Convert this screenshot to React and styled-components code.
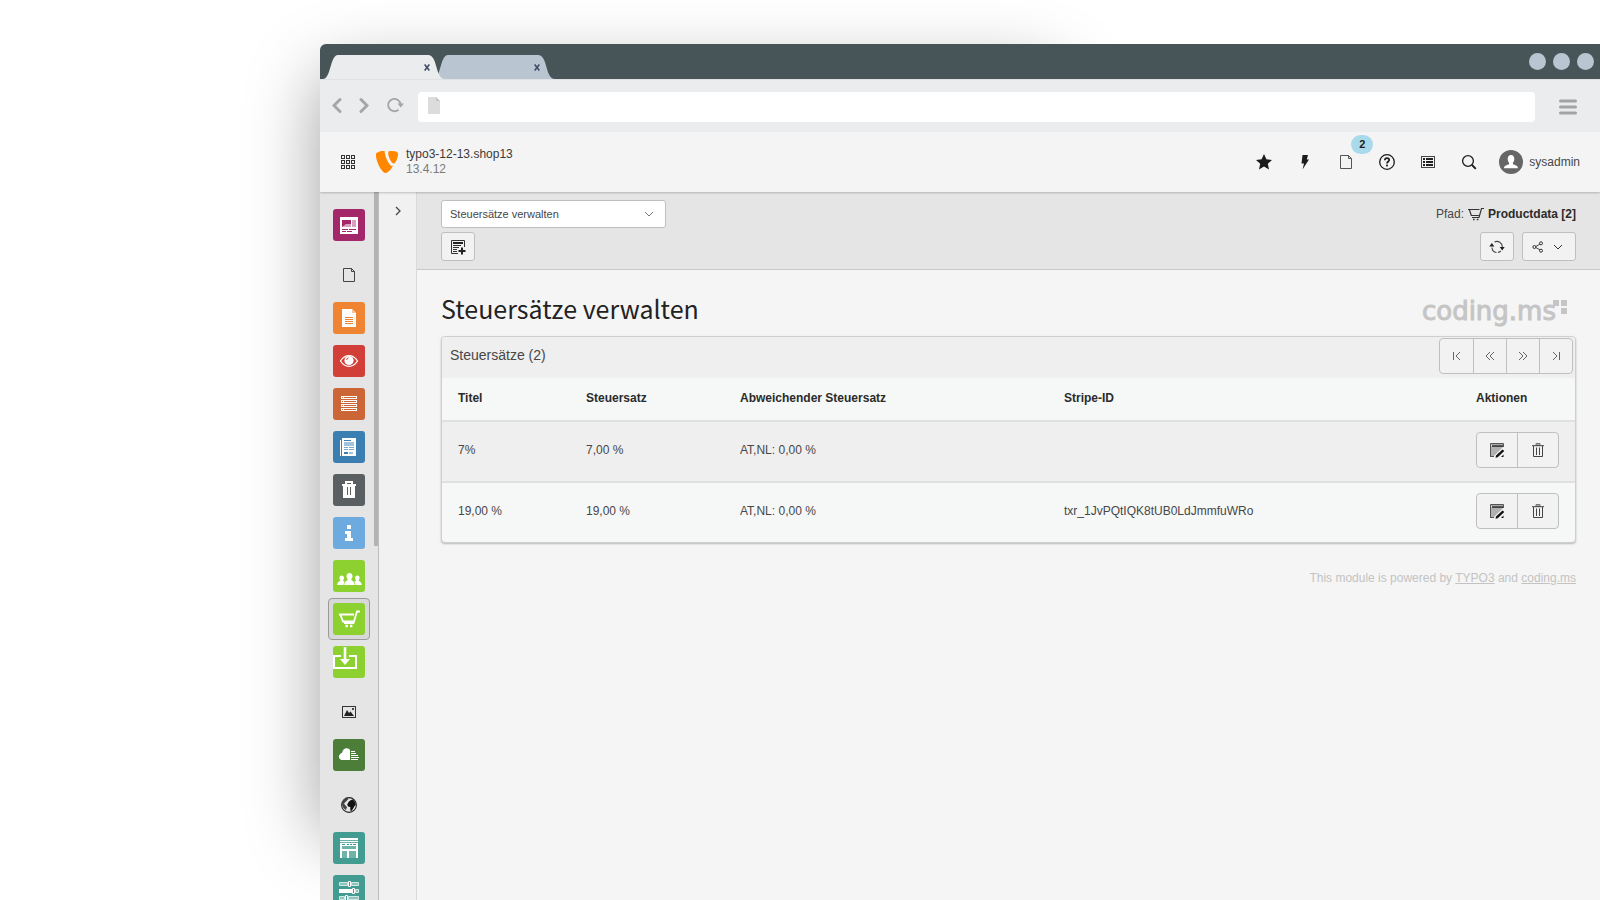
import React from "react";
import styled, { createGlobalStyle, css } from "styled-components";

const GlobalStyle = createGlobalStyle`
  *, *::before, *::after { box-sizing: border-box; }
  html, body { margin: 0; background: #fff; }
  body {
    font-family: "Liberation Sans", Arial, sans-serif;
    font-size: 12px;
    line-height: 16px;
    color: #474747;
  }
  button, select, input { font: inherit; color: inherit; margin: 0; }
  svg { display: block; flex: none; }
`;

/* ---------- page and browser frame ---------- */

const Stage = styled.div`
  height: 100vh;
  padding: 44px 0 0 20%;
  overflow: hidden;
  display: flex;
  isolation: isolate;
`;

const BrowserWindow = styled.div`
  position: relative;
  flex: 1;
  min-width: 0;
  display: flex;
  flex-direction: column;

  &::before {
    content: "";
    position: absolute;
    z-index: -1;
    inset: 28px 42% 60px 0;
    border-radius: 24px;
    box-shadow: -2px 0 70px rgba(0, 0, 0, 0.36);
  }
`;

const TabBar = styled.div`
  flex: none;
  height: 35px;
  padding: 0 6px 0 3px;
  display: flex;
  align-items: flex-end;
  background: #475458;
  border-radius: 6px 0 0 0;
`;

const Tab = styled.div`
  width: 122px;
  height: 24px;
  margin-right: -12px;
  padding: 0 13px;
  display: flex;
  align-items: center;
  justify-content: flex-end;
  position: relative;
  z-index: ${(p) => (p.$active ? 1 : 0)};
  background: ${(p) => (p.$active ? "#ebecee" : "#b9c6d2")};
  clip-path: path("M0 24 C8 24 7 0 15 0 H105 C115 0 112 24 122 24 Z");
`;

const TabClose = styled.button`
  width: 10px;
  height: 14px;
  padding: 0;
  border: 0;
  background: none;
  color: #43506b;
  display: grid;
  place-items: center;
`;

const WindowDots = styled.div`
  margin-left: auto;
  align-self: center;
  display: flex;
  gap: 7px;
`;

const Dot = styled.button`
  width: 17px;
  height: 17px;
  padding: 0;
  border: 0;
  border-radius: 50%;
  background: #b9c6d2;
`;

const BrowserBar = styled.div`
  flex: none;
  height: 53px;
  padding: 1px 23px 0 12px;
  display: flex;
  align-items: center;
  background: #ebecee;
  border-top: 1px solid #dfe1e3;
`;

const BrowserButton = styled.button`
  width: ${(p) => p.$width || 27}px;
  height: 28px;
  padding: 0 0 ${(p) => p.$lift || 0}px;
  border: 0;
  background: none;
  color: #a6a6a6;
  display: flex;
  align-items: center;
  justify-content: ${(p) => p.$align || "flex-start"};
`;

const AddressBar = styled.label`
  flex: 1;
  height: 30px;
  padding: 0 10px 2px;
  display: flex;
  align-items: center;
  gap: 8px;
  background: #fff;
  border-radius: 4px;
`;

const AddressInput = styled.input`
  flex: 1;
  border: 0;
  outline: 0;
  background: none;
`;

/* ---------- backend top bar ---------- */

const TopBar = styled.header`
  flex: none;
  height: 60px;
  padding: 0 20px 0 21px;
  display: flex;
  align-items: center;
  background: #f4f4f4;
  box-shadow: 0 1px 2px rgba(0, 0, 0, 0.22);
  clip-path: inset(0 0 -4px 0);
  z-index: 1;
`;

const PlainButton = styled.button`
  padding: 0;
  border: 0;
  background: none;
  display: grid;
  place-items: center;
`;

const SiteLink = styled.a`
  margin-left: 21px;
  display: flex;
  align-items: center;
  gap: 8px;
  color: #3a3a3a;
  text-decoration: none;
`;

const SiteText = styled.span`
  display: flex;
  flex-direction: column;
  line-height: 15px;
  padding-bottom: 1px;
`;

const Version = styled.span`
  color: #7b7b7b;
`;

const Tools = styled.nav`
  margin-left: auto;
  display: flex;
  align-items: center;
`;

const ToolButton = styled(PlainButton)`
  position: relative;
  width: 41px;
  height: 40px;
  color: #1c1c1c;
`;

const Badge = styled.span`
  position: absolute;
  top: -7px;
  left: 26px;
  width: 22px;
  height: 19px;
  border-radius: 10px;
  background: #a9daec;
  color: #222;
  font-size: 11px;
  line-height: 19px;
  font-weight: bold;
  text-align: center;
`;

const UserButton = styled.button`
  margin-left: 10px;
  padding: 0;
  border: 0;
  background: none;
  display: flex;
  align-items: center;
  gap: 6px;
`;

/* ---------- columns ---------- */

const Body = styled.div`
  flex: 1;
  min-height: 0;
  display: flex;
`;

const Sidebar = styled.nav`
  flex: none;
  width: 59px;
  display: flex;
  background: #e5e5e5;
  border-right: 1px solid #bdbdbd;
`;

const ModuleList = styled.div`
  flex: 1;
  padding: 12px 4px 0 8px;
  display: flex;
  flex-direction: column;
  gap: 1px;
  overflow: hidden;
`;

const ScrollThumb = styled.div`
  width: 4px;
  height: 50%;
  background: #b3b3b3;
`;

const ModuleItem = styled.button`
  flex: none;
  width: 42px;
  height: 42px;
  padding: 0;
  display: grid;
  place-items: center;
  border: 1px solid transparent;
  border-radius: 4px;
  background: none;
  color: #333;
  ${(p) => p.$group && css`margin-top: 7px;`}
  ${(p) => p.$active && css`border-color: #9a9a9a; background: #d8d8d8;`}
`;

const Tile = styled.span`
  width: 32px;
  height: 32px;
  border-radius: 3px;
  background: ${(p) => p.$color};
  display: block;
`;

const TreeColumn = styled.aside`
  flex: none;
  width: 38px;
  padding-top: 11px;
  display: flex;
  flex-direction: column;
  align-items: center;
  background: #f1f1f1;
  border-right: 1px solid #d9d9d9;
`;

const Main = styled.main`
  flex: 1;
  min-width: 0;
  background: #f5f5f5;
`;

const DocHeader = styled.div`
  padding: 8px 24px;
  display: flex;
  flex-direction: column;
  gap: 4px;
  background: #e5e5e5;
  border-bottom: 1px solid #c9c9c9;
`;

const DocRow = styled.div`
  display: flex;
  align-items: center;
  justify-content: space-between;
`;

const SelectWrap = styled.label`
  width: 225px;
  height: 28px;
  display: grid;
  grid-template-columns: 1fr 32px;
  align-items: center;
  justify-items: center;
  background: #fff;
  border: 1px solid #bfbfbf;
  border-radius: 3px;
  color: #777;

  & > * { grid-row: 1; }
  & > svg { grid-column: 2; pointer-events: none; }
`;

const Select = styled.select`
  grid-column: 1 / -1;
  width: 100%;
  height: 26px;
  padding: 0 8px;
  border: 0;
  appearance: none;
  background: none;
  font-size: 11px;
  color: #474747;
`;

const Path = styled.div`
  display: flex;
  align-items: center;
  gap: 4px;
  color: #333;

  span { color: #474747; }
  strong { color: #2b2b2b; }
`;

const ButtonRow = styled.div`
  display: flex;
  gap: 8px;
`;

const Button = styled.button`
  width: ${(p) => p.$width || 34}px;
  height: 29px;
  padding: 0;
  display: flex;
  align-items: center;
  justify-content: center;
  gap: 6px;
  background: #f2f2f2;
  border: 1px solid #bfbfbf;
  border-radius: 3px;
  color: #333;
`;

const Content = styled.div`
  padding: 24px;
`;

const TitleRow = styled.div`
  display: flex;
  align-items: flex-start;
  justify-content: space-between;
  height: 42px;
`;

const Title = styled.h1`
  margin: 0;
  font-family: "Noto Sans CJK SC", "Open Sans", sans-serif;
  font-size: 25px;
  line-height: 28px;
  font-weight: 400;
  color: #222;
`;

const Brand = styled.div`
  position: relative;
  padding-right: 20px;
  font-family: "DejaVu Sans", sans-serif;
  font-size: 26px;
  line-height: 34px;
  color: #c5c5c5;
  -webkit-text-stroke: 1px #c5c5c5;
`;

const BrandSquares = styled.svg`
  position: absolute;
  top: 6px;
  right: 8px;
`;

const Panel = styled.section`
  background: #f6f8f7;
  border: 1px solid #cfcfcf;
  border-radius: 4px;
  box-shadow: 0 1px 2px rgba(0, 0, 0, 0.25);
  overflow: hidden;
`;

const PanelHeader = styled.div`
  height: 41px;
  padding: 0 2px 3px 8px;
  display: flex;
  align-items: center;
  justify-content: space-between;
  background: #efefef;
`;

const PanelTitle = styled.h2`
  margin: 0;
  padding-bottom: 2px;
  font-size: 14px;
  line-height: 20px;
  font-weight: normal;
`;

const ButtonGroup = styled.div`
  display: inline-flex;
  vertical-align: middle;
  border: 1px solid #bfbfbf;
  border-radius: 4px;
  background: #f2f2f2;
`;

const GroupButton = styled.button`
  width: ${(p) => p.$width}px;
  height: 34px;
  padding: 0;
  display: grid;
  place-items: center;
  border: 0;
  background: none;
  color: ${(p) => (p.$muted ? "#666" : "#222")};

  & + & { border-left: 1px solid #bfbfbf; }
`;

const Table = styled.table`
  width: 100%;
  table-layout: fixed;
  border-collapse: separate;
  border-spacing: 0;
`;

const Col = styled.col`
  width: ${(p) => (p.$width ? `${p.$width}px` : "auto")};
`;

const HeadCell = styled.th`
  height: 44px;
  padding: 0 16px 2px;
  text-align: left;
  color: #2b2b2b;
  border-bottom: 2px solid #e0e0e0;
`;

const Row = styled.tr`
  &:nth-child(odd) { background: #efefef; }
  &:last-child > td { border-bottom: 0; height: 59px; }
`;

const Cell = styled.td`
  height: 61px;
  padding: 0 16px 3px;
  white-space: nowrap;
  border-bottom: 2px solid #e0e0e0;
`;

const Footer = styled.footer`
  padding-top: 27px;
  text-align: right;
  color: #c3c3c3;

  a { color: inherit; text-decoration: underline; }
`;

/* ---------- icons ---------- */

const Svg = ({ size = 16, box = 16, children, ...rest }) => (
  <svg width={size} height={size} viewBox={`0 0 ${box} ${box}`} fill="none" aria-hidden="true" {...rest}>
    {children}
  </svg>
);

const Chevron = ({ dir, size = 16, width = 1 }) => {
  const d = {
    left: "M10 4L6 8l4 4",
    right: "M6 4l4 4-4 4",
    down: "M4 6l4 4 4-4",
  }[dir];
  return <Svg size={size}><path d={d} stroke="currentColor" strokeWidth={width} /></Svg>;
};

const NavArrow = ({ flip }) => (
  <svg width="10" height="17" viewBox="0 0 10 17" fill="none" aria-hidden="true">
    <path d={flip ? "M2 2.500l6 6-6 6" : "M8 2.500l-6 6 6 6"} stroke="currentColor" strokeWidth="3" strokeLinecap="round" />
  </svg>
);

const Reload = () => (
  <svg width="18" height="16" viewBox="0 0 18 16" fill="none" aria-hidden="true">
    <path d="M11.500 12.700A6.200 6.200 0 1 1 13.600 7.500" stroke="currentColor" strokeWidth="1.800" />
    <path d="M10.500 6.500h6.500L13.700 10.500z" fill="currentColor" />
  </svg>
);

const PageGlyph = () => (
  <svg width="12" height="17" viewBox="0 0 12 17" aria-hidden="true">
    <path d="M0 0h8l4 4v13H0z" fill="#dcdcdc" />
    <path d="M8 0l4 4H8z" fill="#c4c4c4" />
  </svg>
);

const MenuGlyph = () => (
  <svg width="18" height="16" viewBox="0 0 18 16" aria-hidden="true">
    <path d="M1.500 2h15M1.500 8h15M1.500 14h15" stroke="#a3a3a3" strokeWidth="3" strokeLinecap="round" />
  </svg>
);

const CloseGlyph = () => (
  <svg width="6" height="7" viewBox="0 0 6 7" aria-hidden="true">
    <path d="M.6.500l4.800 6M5.400.500l-4.800 6" stroke="currentColor" strokeWidth="1.700" />
  </svg>
);

const GridIcon = () => (
  <Svg size={14} box={14}>
    {[0, 5, 10].map((y) =>
      [0, 5, 10].map((x) => (
        <rect key={`${x}-${y}`} x={x + 0.5} y={y + 0.5} width="3" height="3" stroke="#333" />
      ))
    )}
  </Svg>
);

const Typo3Logo = () => (
  <Svg size={22} box={22}>
    <path d="M17 14.800c-.3.100-.6.100-1 .1-3 0-7.300-10.300-7.300-13.700 0-1.200.3-1.700.7-2-3.600.4-8 1.700-9.300 3.400C-.2 3 0 3.700 0 4.700 0 10 5.700 22 9.700 22c1.900 0 5-3 7.300-7.200" fill="#ff8700" />
    <path d="M15.200.1C19 .1 22 .7 22 2.900c0 4.400-2.800 9.700-4.200 9.700-2.500 0-5.600-7-5.600-10.400C12.200.6 12.800.1 15.200.1" fill="#ff8700" />
  </Svg>
);

const Star = () => (
  <Svg><path d="M8 0l2.400 5.300 5.600.600-4.200 3.800L13 15.500 8 12.600 3 15.500l1.200-5.800L0 5.900l5.600-.6z" fill="currentColor" /></Svg>
);

const Bolt = () => (
  <Svg><path d="M5.500 1h5.500L9.800 5.500H12L5.500 15.500 7 9.500H4.500z" fill="currentColor" /></Svg>
);

const Doc = ({ color = "#444" }) => (
  <Svg>
    <path d="M2.500 1.500h8l3 3v10h-11zM10.500 1.500v3h3" stroke={color} />
  </Svg>
);

const Help = () => (
  <Svg>
    <circle cx="8" cy="8" r="7.300" stroke="currentColor" strokeWidth="1.300" />
    <path d="M5.800 6.300C5.900 4.900 6.800 4.200 8 4.200s2.200.700 2.200 1.800C10.200 7.500 8 7.500 8 9.500" stroke="currentColor" strokeWidth="1.700" />
    <rect x="7.100" y="10.600" width="1.800" height="1.800" fill="currentColor" />
  </Svg>
);

const ListIcon = () => (
  <Svg>
    <rect x="1.500" y="2.500" width="13" height="11" stroke="#444" />
    <path d="M3 5h2M3 8h2M3 11h2M6 5h7M6 8h7M6 11h7" stroke="#222" strokeWidth="1.800" />
  </Svg>
);

const SearchIcon = () => (
  <Svg>
    <circle cx="7" cy="7" r="5.400" stroke="currentColor" strokeWidth="1.300" />
    <path d="M11 11l3.800 3.800" stroke="currentColor" strokeWidth="1.800" />
  </Svg>
);

const Avatar = () => (
  <Svg size={24} box={24}>
    <circle cx="12" cy="12" r="12" fill="#666" />
    <path d="M12 5c2.200 0 3.300 1.700 3.300 4 0 1.500-.6 3-1.400 3.800v1.400c2 .8 5.100 1.300 5.100 4H5c0-2.700 3.100-3.200 5.100-4v-1.400C9.300 12 8.700 10.500 8.700 9c0-2.300 1.100-4 3.300-4z" fill="#fff" />
  </Svg>
);

const CartPath = () => (
  <>
    <path d="M0 3.500h11.500M1.300 3.500l2 6h7.500M16 2.500h-2.500l-2.500 9H4" stroke="currentColor" strokeWidth="1.200" />
    <path d="M5 12.700h1.600v1.600H5zM8.800 12.700h1.600v1.600H8.800z" fill="currentColor" />
  </>
);

const NewRecord = () => (
  <Svg>
    <path d="M14.500 8V1.500h-13v13H8" stroke="#333" />
    <path d="M3 4h10" stroke="#222" strokeWidth="2" />
    <path d="M3 6.500h8M3 8.500h6M3 10.500h4M3 12.500h4" stroke="#333" />
    <path d="M12 8.500v7M8.500 12h7" stroke="#222" strokeWidth="2" />
  </Svg>
);

const Refresh = () => (
  <Svg>
    <path d="M3 8.500a5.200 5.200 0 0 0 4.500 5M5.500 3a5.400 5.400 0 0 1 7.800 5M9 13.500a5.400 5.400 0 0 0 2.800-1.500M7.500 2.500h2" stroke="#444" strokeWidth="1.100" />
    <path d="M0.300 7.600L2.800 4l2.600 3.600zM10.700 8h5l-2.500 3.600z" fill="#222" />
  </Svg>
);

const Share = () => (
  <Svg size={12} box={12}>
    <path d="M9 2.500L3 6l6 3.500" stroke="#444" />
    <circle cx="9" cy="2.300" r="1.500" fill="#f2f2f2" stroke="#333" />
    <circle cx="2.400" cy="6" r="1.500" fill="#f2f2f2" stroke="#333" />
    <circle cx="9" cy="9.700" r="1.500" fill="#f2f2f2" stroke="#333" />
  </Svg>
);

const Edit = () => (
  <Svg>
    <path d="M2 4h12v1L5 14H2z" fill="#b0b0b0" />
    <path d="M1.500 15V1.500h13V5M1 14.500h4" stroke="#555" />
    <path d="M3 4h11" stroke="#222" strokeWidth="1.600" />
    <path d="M2 2h12v1H2z" fill="#aaa" />
    <path d="M13.500 7.500l1.800 1.600-6.600 6.200-2.200.5.500-2.300zM12 15h2.500v-2.500z" fill="#111" />
  </Svg>
);

const Trash = () => (
  <Svg>
    <path d="M6 1.500h4v2H6z" fill="#aaa" stroke="#777" />
    <path d="M2 3.700h12" stroke="#444" />
    <path d="M3.500 4v10.500h9V4M6.500 5.500v7.500M9.500 5.500v7.500" stroke="#444" />
  </Svg>
);

const PagerIcon = ({ kind }) => {
  const d = {
    first: "M4.500 4v8M11 4L7 8l4 4",
    prev: "M8 4L4 8l4 4M12 4L8 8l4 4",
    next: "M4 4l4 4-4 4M8 4l4 4-4 4",
    last: "M5 4l4 4-4 4M11.500 4v8",
  }[kind];
  return <Svg><path d={d} stroke="currentColor" /></Svg>;
};

const ImageIcon = () => (
  <Svg>
    <rect x="1.500" y="2.500" width="13" height="11" stroke="#333" />
    <path d="M3 12l3-6 2 3 1.500-1.500L13 12z" fill="#222" />
    <rect x="11" y="4" width="2" height="2" fill="#444" />
  </Svg>
);

const Globe = () => (
  <Svg>
    <circle cx="8" cy="8" r="7.400" stroke="#222" strokeWidth="1.100" />
    <path d="M1 6.500C1.500 3.500 3.500 1.500 6.500 1L7.500 2 6 3.500 4.500 5 3 6.500l1.500 2L6 10l-1 3C3 12 1 10 1 6.500z" fill="#444" />
    <path d="M8 4.500L10 3l2-.5L14 5l.8 3-1.300 1-1 2-2 3-1.200-.5V10L7 9.500 6.200 7.500 7 6z" fill="#111" />
  </Svg>
);

/* white drawings on the 32px module tiles */
const tiles = {
  dashboard: (
    <>
      <path d="M7 8h8v-1h10v18H7z" fill="#fff" />
      <path d="M9 11h9v4c-3 0-3 3-9 3z" fill="#a4276a" />
      <path d="M13 15h5v3H9z" fill="#d8a0bf" />
      <path d="M19 11h4v7h-4z" fill="#d8a0bf" />
      <path d="M9 20.500h6M16 20.500h7M9 22.500h4M14 22.500h5M14 7.500h11" stroke="#a4276a" />
    </>
  ),
  page: (
    <>
      <path d="M9 7h10l4 4v14H9z" fill="#fff" />
      <path d="M19 7l4 4h-4z" fill="#f7c196" />
      <path d="M12 15.500h8M12 17.500h8M12 19.500h8M12 21.500h8" stroke="#ef8532" />
    </>
  ),
  view: (
    <>
      <path d="M7.500 16C10 12 13 10.700 16 10.700s6 1.300 8.500 5.300C22 20 19 21.300 16 21.300S10 20 7.500 16z" stroke="#fff" strokeWidth="1.300" />
      <circle cx="16" cy="15.500" r="4.600" fill="#fff" />
      <path d="M13.600 15a2.400 2.400 0 0 1 2-2.200" stroke="#d13f38" strokeWidth="1" />
    </>
  ),
  list: (
    <>
      <path d="M8 8h16v3H8zM8 12h16v3H8zM8 16h16v3H8zM8 20h16v3H8z" fill="#fff" />
      <path d="M11 9.500h12M11 13.500h12M11 17.500h12M11 21.500h12" stroke="#cc6636" />
      <path d="M9 9.500h1M9 13.500h1M9 17.500h1M9 21.500h1" stroke="#cc6636" />
    </>
  ),
  news: (
    <>
      <path d="M9 7h14v18H9zM7 9h1v16H7z" fill="#fff" />
      <path d="M11 9.500h7" stroke="#3b7eb2" />
      <path d="M11 21h4v2h-4z" fill="#3b7eb2" />
      <path d="M11 11h10v4H11zM16 21h4v2h-4z" fill="#a3c3dc" />
      <path d="M11 16.500h4M16 16.500h5M11 18.500h4M16 18.500h5" stroke="#7ba9cc" />
    </>
  ),
  trash: (
    <>
      <path d="M9 10h14v2h-1v12H10V12H9z" fill="#fff" />
      <path d="M13 10V8h6v2" stroke="#fff" strokeWidth="2" />
      <path d="M14.500 13v8M17.500 13v8" stroke="#5a5f61" />
    </>
  ),
  info: <path d="M14 8h4v4h-4zM12 14h6v7h2v3h-8v-3h2v-4h-2z" fill="#fff" />,
  users: (
    <path d="M16.500 13c2 0 3 1.400 3 3.300 0 1.300-.6 2.400-1.300 3.100.200 1.300 3.500 1.600 3.500 5.600H11.300c0-4 3.300-4.300 3.500-5.600-.7-.7-1.300-1.800-1.300-3.100 0-1.900 1-3.300 3-3.300zM8.700 15.500c1.500 0 2.300 1 2.300 2.500 0 1-.4 1.800-1 2.300.1.900 1 .9 1.600 1.400-.7.9-.9 2-1 3.300H4.200c0-3.600 3-3.400 3.200-4.700-.6-.5-1-1.300-1-2.300 0-1.500.8-2.500 2.300-2.500zM24.300 15.500c1.500 0 2.300 1 2.300 2.500 0 1-.4 1.800-1 2.300.2 1.300 3.200 1.100 3.200 4.700h-6.400c-.1-1.300-.3-2.400-1-3.300.6-.5 1.500-.5 1.600-1.400-.6-.5-1-1.300-1-2.300 0-1.500.8-2.500 2.300-2.500z" fill="#fff" />
  ),
  cart: (
    <>
      <path d="M6 11.500h15M7.500 12l2.500 6.500h10.500" stroke="#fff" strokeWidth="1.800" />
      <path d="M27 8.500h-3L20.500 20H11" stroke="#fff" strokeWidth="1.800" />
      <path d="M12.500 21.800h2.400v2.400h-2.400zM17 21.800h2.400v2.400H17z" fill="#fff" />
    </>
  ),
  download: (
    <>
      <path d="M8 10H1v12h22V10h-7" stroke="#fff" strokeWidth="2" />
      <path d="M12 1v14" stroke="#fff" strokeWidth="2.600" />
      <path d="M7 13h10l-5 6z" fill="#fff" />
    </>
  ),
  cloud: (
    <>
      <path d="M17 21H9.500A3.300 3.300 0 0 1 7 15.200c.6-.9 1.300-1.200 2-1.300C9.500 11 11.300 9.300 13.700 9.300c1.500 0 2.600.7 3.300 1.700z" fill="#fff" />
      <path d="M18 12.500h4M18 14.500h5M18 16.500h7M18 18.500h8M18 20.500h7" stroke="#fff" />
    </>
  ),
  site: (
    <>
      <path d="M7 6h18v20H7z" fill="#fff" />
      <path d="M7 8.500h18M7 10.500h18" stroke="#439c92" strokeWidth="0.800" />
      <path d="M9 12.500h3M14 12.500h2M17 12.500h2M20 12.500h3" stroke="#439c92" />
      <path d="M9 14h14v3H9zM9 19h5v7H9zM16 19h7v7h-7z" fill="#6fb3ab" />
    </>
  ),
  sliders: (
    <>
      <path d="M6.500 7.500h8v3h-8zM18.500 7.500h7v3h-7zM22.500 14.500h3v3h-3zM6.500 21.500h5v3h-5zM15.500 21.500h10v3h-10z" fill="#8cc4bd" stroke="#d4e9e7" />
      <path d="M6 14h13v4H6z" fill="#fff" />
      <path d="M15.500 6.500h2v5h-2zM19.500 13.500h2v5h-2zM12.500 20.500h2v5h-2z" stroke="#fff" />
    </>
  ),
};

const modules = [
  { id: "dashboard", label: "Dashboard", color: "#a4276a" },
  { id: "web", label: "Web", icon: <Doc /> },
  { id: "page", label: "Seite", color: "#ef8532" },
  { id: "view", label: "Anzeigen", color: "#d13f38" },
  { id: "list", label: "Liste", color: "#cc6636" },
  { id: "news", label: "News", color: "#3b7eb2" },
  { id: "trash", label: "Papierkorb", color: "#5a5f61" },
  { id: "info", label: "Info", color: "#6daae0" },
  { id: "users", label: "Benutzer", color: "#8cd12f" },
  { id: "cart", label: "Shop", color: "#8cd12f", active: true },
  { id: "download", label: "Downloads", color: "#8cd12f" },
  { id: "media", label: "Datei", icon: <ImageIcon /> },
  { id: "cloud", label: "Dateiliste", color: "#4c7e3a" },
  { id: "sites", label: "Sites", icon: <Globe /> },
  { id: "site", label: "Seiten", color: "#439c92" },
  { id: "sliders", label: "Einstellungen", color: "#439c92" },
];

const rows = [
  { title: "7%", rate: "7,00 %", other: "AT,NL: 0,00 %", stripe: "" },
  { title: "19,00 %", rate: "19,00 %", other: "AT,NL: 0,00 %", stripe: "txr_1JvPQtIQK8tUB0LdJmmfuWRo" },
];

const pager = [
  ["first", "Erste Seite"],
  ["prev", "Vorherige Seite"],
  ["next", "Nächste Seite"],
  ["last", "Letzte Seite"],
];

/* ---------- sections ---------- */

function BrowserChrome() {
  return (
    <>
      <TabBar>
        <Tab $active>
          <TabClose aria-label="Tab schließen"><CloseGlyph /></TabClose>
        </Tab>
        <Tab>
          <TabClose aria-label="Tab schließen"><CloseGlyph /></TabClose>
        </Tab>
        <WindowDots>
          <Dot aria-label="Minimieren" />
          <Dot aria-label="Maximieren" />
          <Dot aria-label="Schließen" />
        </WindowDots>
      </TabBar>
      <BrowserBar>
        <BrowserButton aria-label="Zurück" $width={27} $lift={3}><NavArrow /></BrowserButton>
        <BrowserButton aria-label="Vor" $width={28} $lift={3}><NavArrow flip /></BrowserButton>
        <BrowserButton aria-label="Neu laden" $width={31} $lift={3}><Reload /></BrowserButton>
        <AddressBar>
          <PageGlyph />
          <AddressInput type="text" aria-label="Adresse" />
        </AddressBar>
        <BrowserButton aria-label="Menü" $width={42} $align="flex-end"><MenuGlyph /></BrowserButton>
      </BrowserBar>
    </>
  );
}

function Header() {
  return (
    <TopBar>
      <PlainButton aria-label="Modulmenü"><GridIcon /></PlainButton>
      <SiteLink href="#">
        <Typo3Logo />
        <SiteText>
          <span>typo3-12-13.shop13</span>
          <Version>13.4.12</Version>
        </SiteText>
      </SiteLink>
      <Tools>
        <ToolButton aria-label="Lesezeichen"><Star /></ToolButton>
        <ToolButton aria-label="Cache leeren"><Bolt /></ToolButton>
        <ToolButton aria-label="Offene Dokumente"><Doc color="#555" /><Badge>2</Badge></ToolButton>
        <ToolButton aria-label="Hilfe"><Help /></ToolButton>
        <ToolButton aria-label="Systeminformationen"><ListIcon /></ToolButton>
        <ToolButton aria-label="Suche"><SearchIcon /></ToolButton>
        <UserButton><Avatar />sysadmin</UserButton>
      </Tools>
    </TopBar>
  );
}

function ModuleMenu() {
  return (
    <Sidebar>
      <ModuleList>
        {modules.map((m) => (
          <ModuleItem key={m.id} aria-label={m.label} $group={Boolean(m.icon)} $active={m.active}>
            {m.icon || (
              <Tile $color={m.color}>
                <Svg size={32} box={32}>{tiles[m.id]}</Svg>
              </Tile>
            )}
          </ModuleItem>
        ))}
      </ModuleList>
      <ScrollThumb />
    </Sidebar>
  );
}

function TaxTable() {
  return (
    <Panel>
      <PanelHeader>
        <PanelTitle>Steuersätze (2)</PanelTitle>
        <ButtonGroup>
          {pager.map(([kind, label]) => (
            <GroupButton key={kind} aria-label={label} $width={33} $muted><PagerIcon kind={kind} /></GroupButton>
          ))}
        </ButtonGroup>
      </PanelHeader>
      <Table>
        <colgroup>
          <Col $width={128} />
          <Col $width={154} />
          <Col $width={324} />
          <Col />
          <Col $width={115} />
        </colgroup>
        <thead>
          <tr>
            <HeadCell>Titel</HeadCell>
            <HeadCell>Steuersatz</HeadCell>
            <HeadCell>Abweichender Steuersatz</HeadCell>
            <HeadCell>Stripe-ID</HeadCell>
            <HeadCell>Aktionen</HeadCell>
          </tr>
        </thead>
        <tbody>
          {rows.map((r) => (
            <Row key={r.title}>
              <Cell>{r.title}</Cell>
              <Cell>{r.rate}</Cell>
              <Cell>{r.other}</Cell>
              <Cell>{r.stripe}</Cell>
              <Cell>
                <ButtonGroup>
                  <GroupButton aria-label="Bearbeiten" $width={40}><Edit /></GroupButton>
                  <GroupButton aria-label="Löschen" $width={41}><Trash /></GroupButton>
                </ButtonGroup>
              </Cell>
            </Row>
          ))}
        </tbody>
      </Table>
    </Panel>
  );
}

export default function App() {
  return (
    <>
      <GlobalStyle />
      <Stage>
        <BrowserWindow>
          <BrowserChrome />
          <Header />
          <Body>
            <ModuleMenu />
            <TreeColumn>
              <PlainButton aria-label="Seitenbaum einblenden"><Chevron dir="right" width={1.300} /></PlainButton>
            </TreeColumn>
            <Main>
              <DocHeader>
                <DocRow>
                  <SelectWrap>
                    <Select aria-label="Modulansicht" defaultValue="rates">
                      <option value="rates">Steuersätze verwalten</option>
                    </Select>
                    <Chevron dir="down" />
                  </SelectWrap>
                  <Path>
                    <span>Pfad:</span>
                    <Svg><CartPath /></Svg>
                    <strong>Productdata [2]</strong>
                  </Path>
                </DocRow>
                <DocRow>
                  <Button aria-label="Neuer Steuersatz"><NewRecord /></Button>
                  <ButtonRow>
                    <Button aria-label="Neu laden"><Refresh /></Button>
                    <Button aria-label="Teilen" $width={54}><Share /><Chevron dir="down" /></Button>
                  </ButtonRow>
                </DocRow>
              </DocHeader>
              <Content>
                <TitleRow>
                  <Title>Steuersätze verwalten</Title>
                  <Brand>
                    coding.ms
                    <BrandSquares width="15" height="14" viewBox="0 0 15 14" fill="#c5c5c5" aria-hidden="true">
                      <path d="M0 0h6v6H0zM8 0h6v6H8zM8 8h6v6H8z" />
                    </BrandSquares>
                  </Brand>
                </TitleRow>
                <TaxTable />
                <Footer>
                  This module is powered by <a href="#">TYPO3</a> and <a href="#">coding.ms</a>
                </Footer>
              </Content>
            </Main>
          </Body>
        </BrowserWindow>
      </Stage>
    </>
  );
}
